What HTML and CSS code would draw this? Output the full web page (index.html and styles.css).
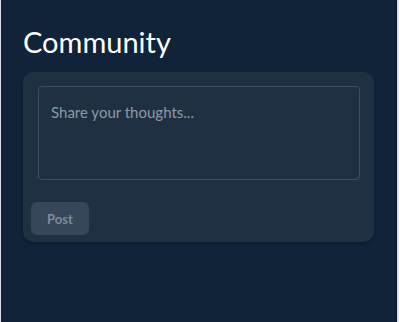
FILE: index.html
```html
<!doctype html>
<html lang="en">
<head>
    <meta charset="UTF-8">
    <meta name="viewport" content="width=device-width, initial-scale=1.0">
    <title>Community</title>
    <link rel="stylesheet" href="styles.css">
</head>
<body>
    <div class="page">
        <h1 class="page-title">Community</h1>
        <div class="post-card">
            <textarea class="post-input" placeholder="Share your thoughts..."></textarea>
            <button class="post-btn" disabled>Post</button>
        </div>
    </div>
</body>
</html>
```

FILE: styles.css
```css
* {
    margin: 0;
    padding: 0;
    box-sizing: border-box;
    font-family: "Lato", "Open Sans", Arial, sans-serif;
}

html {
    background-color: #dfe0ea;
}

body {
    min-height: 322px;
}

.page {
    margin: 0 2px 0 1px;
    min-height: 322px;
    background-color: #112338;
    border-right: 1px solid #0b1828;
    padding: 24px 22px 0 22px;
}

.page-title {
    color: #ffffff;
    font-size: 29px;
    font-weight: 400;
    line-height: 36px;
    margin-bottom: 12px;
}

.post-card {
    background-color: #1e3041;
    border-radius: 10px;
    box-shadow: 0 2px 3px rgba(0, 0, 0, 0.25);
    padding: 14px 14px 7px 8px;
}

.post-input {
    display: block;
    width: calc(100% - 7px);
    height: 94px;
    margin-left: 7px;
    margin-bottom: 22px;
    padding: 16px 12px;
    background-color: #1e3041;
    border: 1px solid #3d4f62;
    border-radius: 4px;
    color: #c8d2dc;
    font-size: 15px;
    resize: none;
}

.post-input::placeholder {
    color: #8c9aa9;
}

.post-btn {
    width: 58px;
    height: 33px;
    background-color: #354759;
    color: #7e8c9b;
    border: none;
    border-radius: 6px;
    font-size: 13px;
    font-weight: 700;
}
```
